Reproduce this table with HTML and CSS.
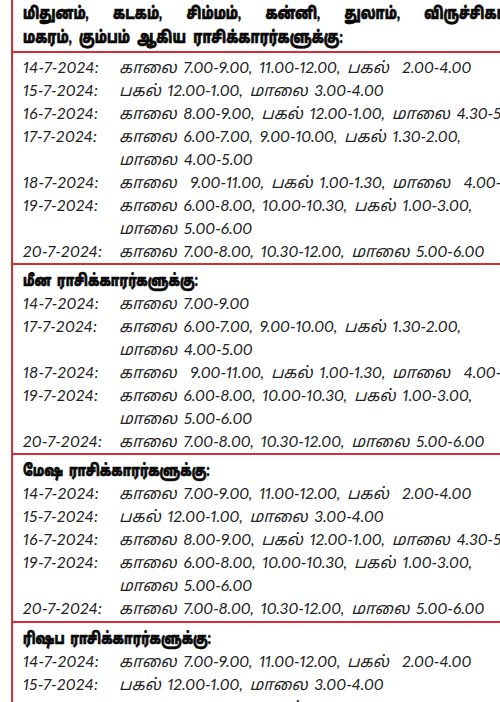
FILE: index.html
```html
<!DOCTYPE html>
<html lang="ta">
<head>
<meta charset="utf-8">
<title>ராசி நேரங்கள்</title>
<link rel="stylesheet" href="styles.css">
</head>
<body>
<div class="page">
  <section class="sec sec-first">
    <h2 class="head head-wide">
      <span class="hl hl-1">மிதுனம், கடகம், சிம்மம், கன்னி, துலாம், விருச்சிகம், தனுசு,</span>
      <span class="hl hl-2">மகரம், கும்பம் ஆகிய ராசிக்காரர்களுக்கு:</span>
    </h2>
  </section>
  <section class="sec body-first">
    <div class="rows">
      <span class="d">14-7-2024:</span><span class="t">காலை 7.00-9.00, 11.00-12.00, பகல்&nbsp; 2.00-4.00</span>
      <span class="d">15-7-2024:</span><span class="t">பகல் 12.00-1.00, மாலை 3.00-4.00</span>
      <span class="d">16-7-2024:</span><span class="t">காலை 8.00-9.00, பகல் 12.00-1.00, மாலை 4.30-5.30</span>
      <span class="d">17-7-2024:</span><span class="t">காலை 6.00-7.00, 9.00-10.00, பகல் 1.30-2.00,</span>
      <span class="d"></span><span class="t">மாலை 4.00-5.00</span>
      <span class="d">18-7-2024:</span><span class="t">காலை&nbsp; 9.00-11.00, பகல் 1.00-1.30, மாலை&nbsp; 4.00-6.00</span>
      <span class="d">19-7-2024:</span><span class="t">காலை 6.00-8.00, 10.00-10.30, பகல் 1.00-3.00,</span>
      <span class="d"></span><span class="t">மாலை 5.00-6.00</span>
      <span class="d">20-7-2024:</span><span class="t">காலை 7.00-8.00, 10.30-12.00, மாலை 5.00-6.00</span>
    </div>
  </section>
  <section class="sec">
    <h2 class="head"><span class="hl">மீன ராசிக்காரர்களுக்கு:</span></h2>
    <div class="rows">
      <span class="d">14-7-2024:</span><span class="t">காலை 7.00-9.00</span>
      <span class="d">17-7-2024:</span><span class="t">காலை 6.00-7.00, 9.00-10.00, பகல் 1.30-2.00,</span>
      <span class="d"></span><span class="t">மாலை 4.00-5.00</span>
      <span class="d">18-7-2024:</span><span class="t">காலை&nbsp; 9.00-11.00, பகல் 1.00-1.30, மாலை&nbsp; 4.00-6.00</span>
      <span class="d">19-7-2024:</span><span class="t">காலை 6.00-8.00, 10.00-10.30, பகல் 1.00-3.00,</span>
      <span class="d"></span><span class="t">மாலை 5.00-6.00</span>
      <span class="d">20-7-2024:</span><span class="t">காலை 7.00-8.00, 10.30-12.00, மாலை 5.00-6.00</span>
    </div>
  </section>
  <section class="sec sec-mesha">
    <h2 class="head"><span class="hl">மேஷ ராசிக்காரர்களுக்கு:</span></h2>
    <div class="rows">
      <span class="d">14-7-2024:</span><span class="t">காலை 7.00-9.00, 11.00-12.00, பகல்&nbsp; 2.00-4.00</span>
      <span class="d">15-7-2024:</span><span class="t">பகல் 12.00-1.00, மாலை 3.00-4.00</span>
      <span class="d">16-7-2024:</span><span class="t">காலை 8.00-9.00, பகல் 12.00-1.00, மாலை 4.30-5.30</span>
      <span class="d">19-7-2024:</span><span class="t">காலை 6.00-8.00, 10.00-10.30, பகல் 1.00-3.00,</span>
      <span class="d"></span><span class="t">மாலை 5.00-6.00</span>
      <span class="d">20-7-2024:</span><span class="t">காலை 7.00-8.00, 10.30-12.00, மாலை 5.00-6.00</span>
    </div>
  </section>
  <section class="sec sec-last">
    <h2 class="head"><span class="hl">ரிஷப ராசிக்காரர்களுக்கு:</span></h2>
    <div class="rows">
      <span class="d">14-7-2024:</span><span class="t">காலை 7.00-9.00, 11.00-12.00, பகல்&nbsp; 2.00-4.00</span>
      <span class="d">15-7-2024:</span><span class="t">பகல் 12.00-1.00, மாலை 3.00-4.00</span>
      <span class="d">16-7-2024:</span><span class="t">காலை 8.00-9.00, பகல் 12.00-1.00, மாலை 4.30-5.30</span>
    </div>
  </section>
</div>
</body>
</html>
```
FILE: styles.css
```css
html, body {
  margin: 0;
  padding: 0;
  background: #ffffff;
}
body {
  width: 500px;
  height: 702px;
  overflow: hidden;
  font-family: "Lato", "Noto Sans Tamil", "Noto Sans Tamil UI", "Lohit Tamil", "FreeSans", sans-serif;
  color: #262626;
}
.page {
  margin-left: 11px;
  width: 489px;
  border-left: 2px solid #d52d38;
  min-height: 702px;
}
.sec {
  border-bottom: 2px solid #d52d38;
  padding: 0 0 1px 10px;
}
.sec-first {
  padding-bottom: 2px;
}
.body-first {
  padding-top: 2px;
}
.sec-mesha {
  padding-bottom: 2px;
}
.sec-last {
  border-bottom: none;
}
.head {
  margin: 0;
  padding-top: 3px;
  font-size: 16px;
  font-weight: 900;
  line-height: 23px;
  color: #0a0a0a;
  white-space: nowrap;
  word-spacing: 4px;
  -webkit-text-stroke: 0.6px #0a0a0a;
}
.head-wide {
  padding-top: 1px;
  font-size: 17px;
  line-height: 24px;
}
.hl {
  display: block;
  transform: scaleX(0.74);
  transform-origin: left center;
}
.hl-1 {
  word-spacing: 29px;
}
.hl-2 {
  word-spacing: 6px;
}
.rows {
  display: grid;
  grid-template-columns: 96px auto;
  font-style: italic;
  font-size: 16px;
  line-height: 23px;
  white-space: nowrap;
  word-spacing: 3px;
  font-variant-numeric: proportional-nums;
  color: #222222;
}
.d {
  letter-spacing: 0.4px;
}
```
